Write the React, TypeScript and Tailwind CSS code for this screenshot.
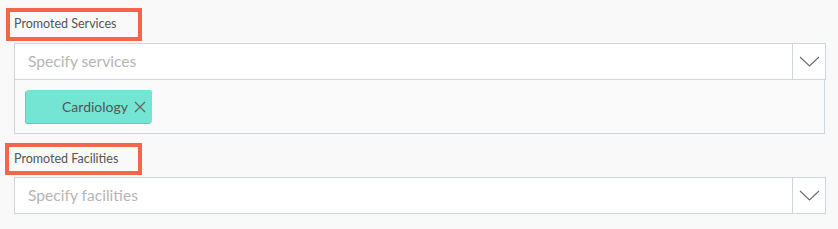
import React from "react";

function Chevron() {
  return (
    <svg width="21" height="11" viewBox="0 0 21 11" fill="none">
      <path d="M1 1 L10.5 10 L20 1" stroke="#6b6b6b" strokeWidth="1.1" />
    </svg>
  );
}

function Select({ placeholder }: { placeholder: string }) {
  return (
    <div className="flex h-[37px] w-[812px] border border-[#ccd6dc] bg-white">
      <div className="flex flex-1 items-center pl-[13px] text-[15.6px] text-[#b5b5b5]">{placeholder}</div>
      <div className="flex w-[33px] items-center justify-center border-l border-[#ccd6dc]">
        <Chevron />
      </div>
    </div>
  );
}

export default function App() {
  return (
    <div
      className="h-[229px] w-[838px] bg-[#f9f9f9] pl-[14px] pt-[8px]"
      style={{ fontFamily: "Lato, 'Noto Sans', sans-serif" }}
    >
      <div className="ml-[-8px] flex h-[33px] w-[136px] items-center border-4 border-[#f4654c] pl-[4px] text-[12.5px] text-[#555]">
        Promoted Services
      </div>
      <div className="mt-[2px]">
        <Select placeholder="Specify services" />
        <div className="flex h-[54px] w-[811px] items-center border-x border-b border-[#ccd6dc] bg-[#fafafa] pl-[11px]">
          <div className="flex h-[33px] w-[126px] items-center rounded-[2px] bg-[#74e4d3] pl-[36px] text-[14px] text-[#555] shadow-[-1px_1px_0_#5fcfbd]">
            <span>Cardiology</span>
            <svg className="ml-[6px]" width="12" height="12" viewBox="0 0 12 12">
              <path d="M1 1 L11 11 M11 1 L1 11" stroke="#666" strokeWidth="1.3" />
            </svg>
          </div>
        </div>
      </div>
      <div className="ml-[-9px] mt-[9px] flex h-[32px] w-[137px] items-center border-4 border-[#f4654c] pl-[5px] text-[12.5px] text-[#555]">
        Promoted Facilities
      </div>
      <div className="mt-[2px]">
        <Select placeholder="Specify facilities" />
      </div>
    </div>
  );
}
